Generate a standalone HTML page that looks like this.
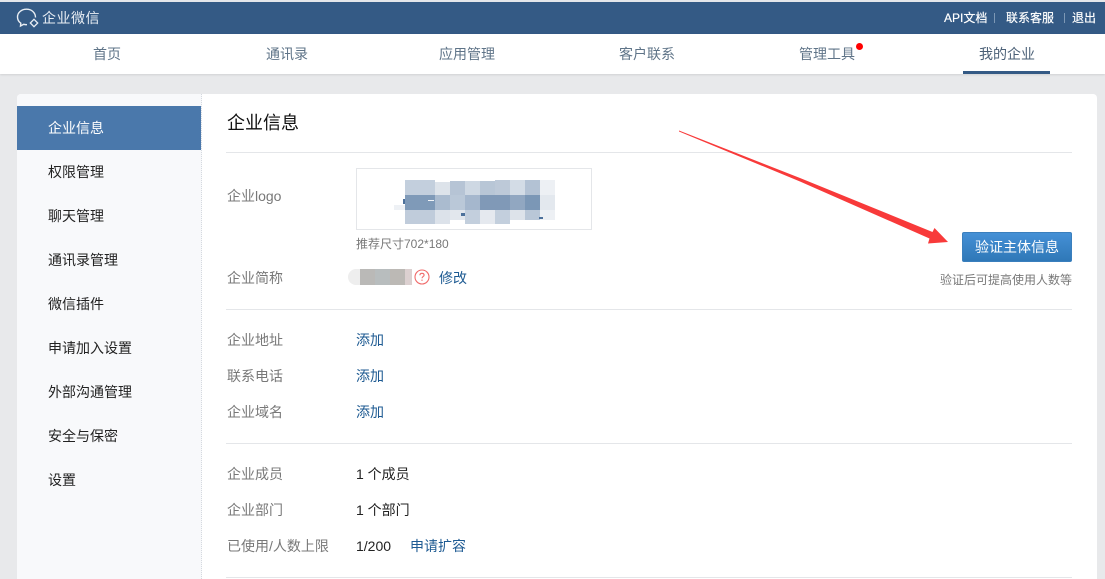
<!DOCTYPE html>
<html lang="zh-CN"><head><meta charset="utf-8"><title>企业微信</title>
<style>
html,body{margin:0;padding:0}
body{width:1105px;height:579px;position:relative;overflow:hidden;background:#e8e9eb;font-family:"Liberation Sans","Microsoft YaHei","Noto Sans CJK SC",sans-serif;font-size:14px;color:#222}
.a{position:absolute;white-space:nowrap}
.t{line-height:20px;height:20px}
.top{left:0;top:2px;width:1105px;height:32px;background:#345a85}
.nav{left:0;top:34px;width:1105px;height:40px;background:#fff;box-shadow:0 1px 2px rgba(0,0,0,.1)}
.n{top:44px;color:#5f7488;text-align:center;width:120px}
.panel{left:17px;top:94px;width:1080px;height:485px;background:#fff;border-radius:4px 4px 0 0;overflow:hidden}
.side{left:17px;top:94px;width:184px;height:485px;background:#f8f9fb;border-right:1px dotted #d5d9df;border-radius:4px 0 0 0}
.s{left:48px;color:#222}
.hr{left:226px;width:846px;height:1px;background:#e4e6e9}
.l{left:227px;color:#787878}
.v{left:356px;color:#222}
.lk{color:#1d5a92}
.tr{color:#fff;font-size:12px;text-shadow:0 0 .5px #fff}
.m{position:absolute;width:15px;height:15px}
</style></head><body>
<div class="a" style="left:0;top:0;width:1105px;height:2px;background:#e4e6ea"></div>
<div class="a top"></div>
<svg class="a" style="left:16px;top:8px" width="24" height="20" viewBox="0 0 24 20" fill="none" stroke="#e8edf3" stroke-width="1.4"><path d="M19.500 9.500C19.500 4.500 15.500 1.200 10.500 1.200 5.300 1.200 1.500 4.700 1.500 9c0 2.700 1.300 4.800 3.300 6.200L4.500 18l3.300-1.700c1 .3 2 .4 3.200.4"/><path d="M18 11.300l3.700 3.700-3.700 3.700-3.700-3.700z" stroke-width="1.300"/></svg>
<div class="a t" style="left:42px;top:8px;color:#e9eef4;font-size:14px;letter-spacing:.5px">企业微信</div>
<div class="a t tr" style="left:944px;top:8px">API文档</div>
<div class="a" style="left:994px;top:13px;width:1px;height:10px;background:#7d98b5"></div>
<div class="a t tr" style="left:1006px;top:8px">联系客服</div>
<div class="a" style="left:1064px;top:13px;width:1px;height:10px;background:#7d98b5"></div>
<div class="a t tr" style="left:1072px;top:8px">退出</div>

<div class="a nav"></div>
<div class="a t n" style="left:47px">首页</div>
<div class="a t n" style="left:227px">通讯录</div>
<div class="a t n" style="left:407px">应用管理</div>
<div class="a t n" style="left:587px">客户联系</div>
<div class="a t n" style="left:767px">管理工具</div>
<div class="a" style="left:856px;top:43px;width:7px;height:7px;border-radius:50%;background:#f00"></div>
<div class="a t n" style="left:947px;color:#4a5f76">我的企业</div>
<div class="a" style="left:963px;top:71px;width:87px;height:3px;background:#345a85"></div>

<div class="a panel"></div>
<div class="a side"></div>
<div class="a" style="left:17px;top:106px;width:184px;height:44px;background:#4a78ab"></div>
<div class="a t s" style="top:118px;color:#fff">企业信息</div>
<div class="a t s" style="top:162px">权限管理</div>
<div class="a t s" style="top:206px">聊天管理</div>
<div class="a t s" style="top:250px">通讯录管理</div>
<div class="a t s" style="top:294px">微信插件</div>
<div class="a t s" style="top:338px">申请加入设置</div>
<div class="a t s" style="top:382px">外部沟通管理</div>
<div class="a t s" style="top:426px">安全与保密</div>
<div class="a t s" style="top:470px">设置</div>

<div class="a" style="left:227px;top:111px;font-size:18px;line-height:24px;color:#111">企业信息</div>
<div class="a hr" style="top:152px"></div>

<div class="a t l" style="top:186px">企业logo</div>
<div class="a" style="left:356px;top:168px;width:234px;height:60px;border:1px solid #e4e6e9"></div>
<div class="a" style="left:394px;top:205px;width:11px;height:5px;background:#eef1f5"></div>
<div class="a" style="left:405px;top:180px;width:150px;height:44px;overflow:hidden">
<i class="m" style="left:0;top:0;width:30px;background:#c3cfdd"></i><i class="m" style="left:30px;top:2px;background:#dde3ea"></i><i class="m" style="left:45px;top:1px;background:#b6c4d5"></i><i class="m" style="left:60px;top:1px;background:#ced8e3"></i><i class="m" style="left:75px;top:1px;background:#b8c6d6"></i><i class="m" style="left:90px;top:0;background:#bdc9d8"></i><i class="m" style="left:105px;top:0;background:#d3dce6"></i><i class="m" style="left:120px;top:0;background:#b3c2d4"></i><i class="m" style="left:135px;top:0;background:#edf0f4"></i>
<i class="m" style="left:0;top:15px;width:30px;background:#7f9ab8"></i><i class="m" style="left:30px;top:15px;background:#aabbcf"></i><i class="m" style="left:45px;top:15px;background:#bac8d8"></i><i class="m" style="left:60px;top:15px;background:#a5b7cd"></i><i class="m" style="left:75px;top:15px;width:30px;background:#8099b7"></i><i class="m" style="left:105px;top:15px;background:#91a7c1"></i><i class="m" style="left:120px;top:15px;background:#7b97b6"></i><i class="m" style="left:135px;top:15px;background:#e3e8ee"></i>
<i class="m" style="left:0;top:30px;width:30px;background:#c0ccdb"></i><i class="m" style="left:30px;top:30px;background:#dce2ea"></i><i class="m" style="left:45px;top:30px;height:10px;background:#e2e7ed"></i><i class="m" style="left:60px;top:30px;background:#c3cfdd"></i><i class="m" style="left:75px;top:30px;background:#e5e9ef"></i><i class="m" style="left:90px;top:30px;background:#c3cfdd"></i><i class="m" style="left:105px;top:30px;height:10px;background:#dde3ea"></i><i class="m" style="left:120px;top:30px;height:10px;background:#b9c7d7"></i><i class="m" style="left:135px;top:30px;height:10px;background:#edf0f4"></i>
</div>
<div class="a" style="left:403px;top:199px;width:2px;height:5px;background:#4d719b"></div>
<div class="a" style="left:428px;top:200px;width:6px;height:1px;background:#f2f5f8"></div>
<div class="a" style="left:461px;top:213px;width:4px;height:3px;background:#4d719b"></div>
<div class="a" style="left:539px;top:217px;width:4px;height:2px;background:#4d719b"></div>
<div class="a t" style="left:356px;top:234px;font-size:12px;color:#787878">推荐尺寸702*180</div>

<div class="a t l" style="top:268px">企业简称</div>
<div class="a" style="left:348px;top:269px;width:12px;height:16px;background:#eee;border-radius:8px 0 0 8px"></div>
<div class="a" style="left:360px;top:269px;width:15px;height:16px;background:#bab9b7"></div>
<div class="a" style="left:375px;top:269px;width:15px;height:16px;background:#b8bdbe"></div>
<div class="a" style="left:390px;top:269px;width:15px;height:16px;background:#bcb9b5"></div>
<div class="a" style="left:405px;top:269px;width:7px;height:16px;background:#dcd0d0"></div>
<svg class="a" style="left:414px;top:269px" width="16" height="16" viewBox="0 0 16 16"><circle cx="8" cy="8" r="7" fill="none" stroke="#f06a6a" stroke-width="1.100"/><path d="M5.900 6.300C5.900 5 6.800 4.300 8 4.300s2.100.7 2.100 1.800c0 1.500-2.100 1.500-2.100 3.200" fill="none" stroke="#f06a6a" stroke-width="1.100"/><rect x="7.400" y="10.600" width="1.200" height="1.200" fill="#f06a6a"/></svg>
<div class="a t lk" style="left:439px;top:268px">修改</div>

<div class="a" style="left:962px;top:232px;width:108px;height:28px;border:1px solid #3a7fbd;border-radius:2px;background:linear-gradient(#4590d6,#2f78b7);color:#fff;text-align:center;line-height:28px;font-size:14px">验证主体信息</div>
<div class="a t" style="right:33px;top:270px;font-size:12px;color:#787878">验证后可提高使用人数等</div>

<div class="a hr" style="top:309px"></div>
<div class="a t l" style="top:330px">企业地址</div><div class="a t lk" style="left:356px;top:330px">添加</div>
<div class="a t l" style="top:366px">联系电话</div><div class="a t lk" style="left:356px;top:366px">添加</div>
<div class="a t l" style="top:402px">企业域名</div><div class="a t lk" style="left:356px;top:402px">添加</div>
<div class="a hr" style="top:443px"></div>
<div class="a t l" style="top:464px">企业成员</div><div class="a t v" style="top:464px">1 个成员</div>
<div class="a t l" style="top:500px">企业部门</div><div class="a t v" style="top:500px">1 个部门</div>
<div class="a t l" style="top:536px">已使用/人数上限</div><div class="a t v" style="top:536px">1/200</div>
<div class="a t lk" style="left:410px;top:536px">申请扩容</div>
<div class="a hr" style="top:577px"></div>

<svg class="a" style="left:0;top:0" width="1105" height="579" viewBox="0 0 1105 579"><polygon points="679,130.500 800,178 932.500,232 934.500,228 948,242 928,243.500 929.500,238.500 800,181.500 679,131.500" fill="#f83a3a"/></svg>
</body></html>
